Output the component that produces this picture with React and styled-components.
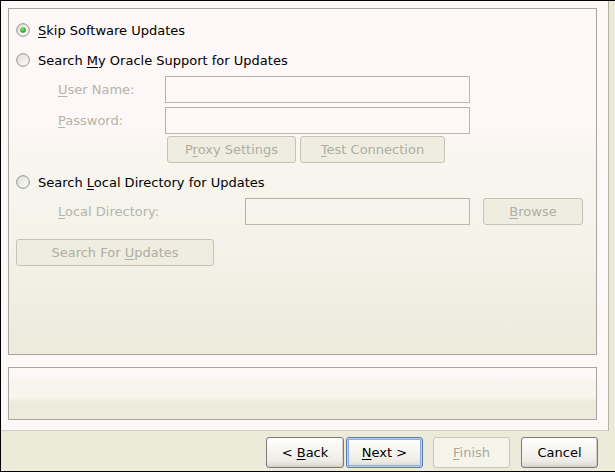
import React from 'react';
import styled, { createGlobalStyle, css } from 'styled-components';

const GlobalStyle = createGlobalStyle`
  html, body {
    margin: 0;
    padding: 0;
    background: #ecead9;
  }
  * {
    box-sizing: border-box;
  }
`;

const Frame = styled.div`
  width: 615px;
  height: 472px;
  border-top: 1px solid #000;
  border-left: 1px solid #000;
  border-bottom: 1px solid #000;
  background: #ecead9;
  display: flex;
  flex-direction: column;
  font-family: 'DejaVu Sans', 'Liberation Sans', sans-serif;
  font-size: 13px;
  color: #000;
  overflow: hidden;
`;

const Content = styled.div`
  width: 608px;
  height: 430px;
  background: #fdf7f7;
  border-right: 1px solid #b4b2a8;
  border-bottom: 1px solid #cfcdc3;
  padding: 7px 0 0 7px;
  display: flex;
  flex-direction: column;
  gap: 12px;
`;

const MainPanel = styled.div`
  width: 589px;
  height: 347px;
  border: 1px solid #a6a5a3;
  background: linear-gradient(
    to bottom,
    #fdf7f7 0px,
    #fdf7f7 122px,
    #f7f6f0 140px,
    #f4f3ea 240px,
    #eeede0 300px,
    #ecebdc 100%
  );
  padding: 0 0 0 7px;
  display: flex;
  flex-direction: column;
  align-items: flex-start;
`;

const StatusPanel = styled.div`
  width: 589px;
  height: 53px;
  border: 1px solid #a6a5a3;
  background: linear-gradient(
    to bottom,
    #fdf7f7 0px,
    #fdf7f7 10px,
    #f6f5ee 14px,
    #f6f5ee 30px,
    #ecebdc 34px,
    #ecebdc 100%
  );
`;

const RadioRow = styled.label`
  display: flex;
  align-items: center;
  gap: 8px;
  height: 18px;
  margin-top: ${(p) => p.$top}px;
  cursor: default;
  white-space: nowrap;
`;

const Key = styled.span`
  text-decoration: underline;
  text-underline-offset: 2px;
`;

const FieldRow = styled.div`
  display: flex;
  align-items: center;
  height: 27px;
  margin-top: ${(p) => p.$top}px;
  margin-left: ${(p) => p.$left || 0}px;
`;

const FieldLabel = styled.span`
  width: ${(p) => p.$width}px;
  color: #b5b4aa;
  white-space: nowrap;
`;

const TextBox = styled.div`
  width: ${(p) => p.$width}px;
  height: 27px;
  border: 1px solid #bcb8b0;
  border-top-color: #b5b1a9;
  border-left-color: #b5b1a9;
  background: transparent;
`;

const PanelButton = styled.button`
  width: ${(p) => p.$width}px;
  height: 27px;
  margin-left: ${(p) => p.$gap || 0}px;
  border: 1px solid #c4c3b5;
  border-radius: 3px;
  background: #eeede0;
  color: #afaea2;
  font-family: inherit;
  font-size: 13px;
  padding: 0;
  white-space: nowrap;
`;

const Footer = styled.div`
  flex: 1;
  display: flex;
  justify-content: flex-end;
  align-items: flex-start;
  padding: 6px 17px 0 0;
`;

const WizardButton = styled.button`
  width: ${(p) => p.$width}px;
  height: 31px;
  margin-left: ${(p) => p.$gap || 0}px;
  border-radius: 3px;
  font-family: inherit;
  font-size: 13px;
  padding: 0;
  color: #000;
  border: 1px solid #7b7b7b;
  background: linear-gradient(to bottom, #ffffff 0%, #f7f6f2 40%, #ecebe5 80%, #d8d5cb 100%);
  box-shadow: inset -1px -1px 0 #d2cfc4;
  ${(p) =>
    p.$default &&
    css`
      box-shadow: inset 0 0 0 1px #b9d0f5, inset 0 0 0 2px #8cabe6;
      border-color: #5d77a8;
    `}
  ${(p) =>
    p.disabled &&
    css`
      color: #aca899;
      border-color: #c9c7ba;
      background: #f5f4ea;
      box-shadow: none;
    `}
`;

function Radio({ checked }) {
  return (
    <svg width="14" height="14" viewBox="0 0 14 14">
      <defs>
        <linearGradient id="radioFill" x1="0" y1="0" x2="1" y2="1">
          <stop offset="0" stopColor="#dcdcd0" />
          <stop offset="1" stopColor="#ffffff" />
        </linearGradient>
        <radialGradient id="radioDot" cx="0.4" cy="0.35" r="0.65">
          <stop offset="0" stopColor="#7cf07c" />
          <stop offset="1" stopColor="#179617" />
        </radialGradient>
      </defs>
      <circle cx="7" cy="7" r="6.3" fill="url(#radioFill)" stroke="#8f9090" strokeWidth="1" />
      {checked && <circle cx="7" cy="7" r="2.8" fill="url(#radioDot)" />}
    </svg>
  );
}

export default function App() {
  return (
    <>
      <GlobalStyle />
      <Frame>
        <Content>
          <MainPanel>
            <RadioRow $top={12}>
              <Radio checked />
              <span>
                <Key>S</Key>kip Software Updates
              </span>
            </RadioRow>
            <RadioRow $top={12}>
              <Radio />
              <span>
                Search <Key>M</Key>y Oracle Support for Updates
              </span>
            </RadioRow>

            <FieldRow $top={7} $left={42}>
              <FieldLabel $width={107}>
                <Key>U</Key>ser Name:
              </FieldLabel>
              <TextBox $width={305} />
            </FieldRow>
            <FieldRow $top={4} $left={42}>
              <FieldLabel $width={107}>
                <Key>P</Key>assword:
              </FieldLabel>
              <TextBox $width={305} />
            </FieldRow>
            <FieldRow $top={2} $left={151}>
              <PanelButton $width={129} disabled>
                P<Key>r</Key>oxy Settings
              </PanelButton>
              <PanelButton $width={145} $gap={4} disabled>
                <Key>T</Key>est Connection
              </PanelButton>
            </FieldRow>

            <RadioRow $top={10}>
              <Radio />
              <span>
                Search <Key>L</Key>ocal Directory for Updates
              </span>
            </RadioRow>
            <FieldRow $top={7} $left={42}>
              <FieldLabel $width={187}>
                <Key>L</Key>ocal Directory:
              </FieldLabel>
              <TextBox $width={225} />
              <PanelButton $width={100} $gap={13} disabled>
                <Key>B</Key>rowse
              </PanelButton>
            </FieldRow>

            <FieldRow $top={14} $left={0}>
              <PanelButton $width={198} disabled>
                Search For <Key>U</Key>pdates
              </PanelButton>
            </FieldRow>
          </MainPanel>
          <StatusPanel />
        </Content>
        <Footer>
          <WizardButton $width={78}>
            &lt; <Key>B</Key>ack
          </WizardButton>
          <WizardButton $width={77} $gap={2} $default>
            <Key>N</Key>ext &gt;
          </WizardButton>
          <WizardButton $width={77} $gap={10} disabled>
            <Key>F</Key>inish
          </WizardButton>
          <WizardButton $width={77} $gap={11}>
            Cancel
          </WizardButton>
        </Footer>
      </Frame>
    </>
  );
}
